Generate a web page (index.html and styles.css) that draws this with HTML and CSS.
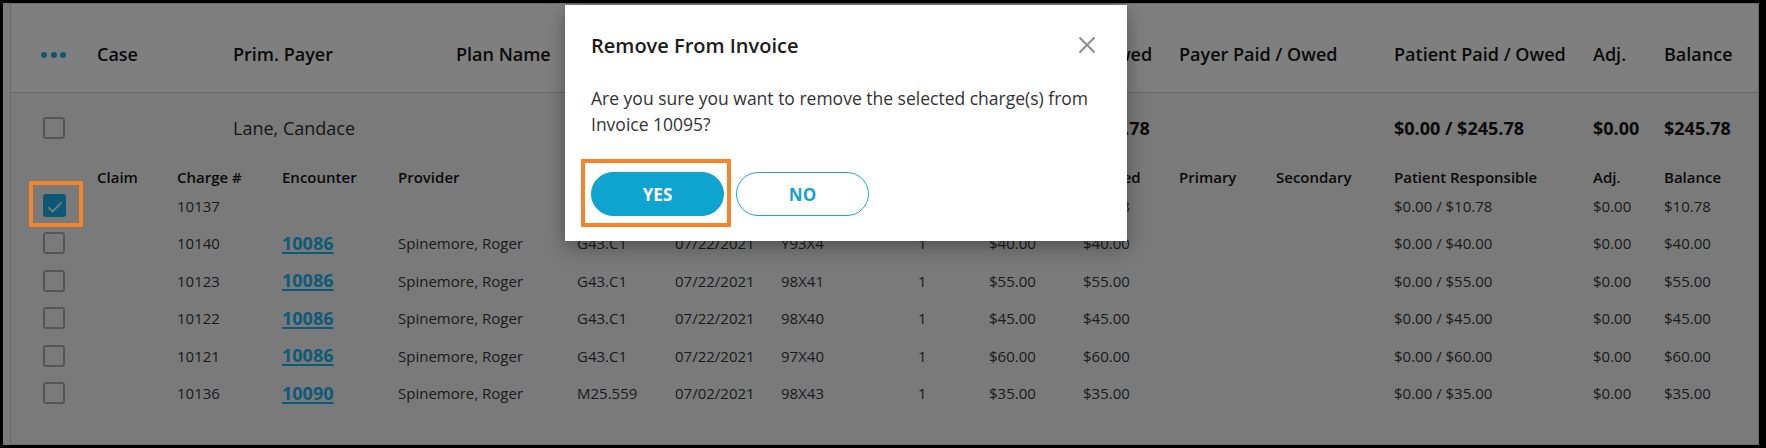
FILE: index.html
```html
<!DOCTYPE html>
<html lang="en">
<head>
<meta charset="utf-8">
<title>Remove From Invoice</title>
<link rel="stylesheet" href="styles.css">
</head>
<body>
<div class="frame">
  <div class="table">
    <div class="row head">
      <div class="dots"><span></span><span></span><span></span></div>
      <div>Case</div>
      <div>Prim. Payer</div>
      <div>Plan Name</div>
      <div></div>
      <div>Allowed</div>
      <div>Payer Paid / Owed</div>
      <div>Patient Paid / Owed</div>
      <div>Adj.</div>
      <div>Balance</div>
    </div>
    <div class="row summary">
      <div><span class="cb"></span></div>
      <div></div>
      <div>Lane, Candace</div>
      <div></div>
      <div></div>
      <div class="strong">$245.78</div>
      <div></div>
      <div class="strong">$0.00 / $245.78</div>
      <div class="strong">$0.00</div>
      <div class="strong">$245.78</div>
    </div>
    <div class="row detail subhead">
      <div></div>
      <div>Claim</div>
      <div>Charge #</div>
      <div>Encounter</div>
      <div>Provider</div>
      <div></div>
      <div></div>
      <div></div>
      <div></div>
      <div></div>
      <div>Allowed</div>
      <div>Primary</div>
      <div>Secondary</div>
      <div>Patient Responsible</div>
      <div>Adj.</div>
      <div>Balance</div>
    </div>
    <div class="row detail line">
      <div><span class="cb checked"><svg viewBox="0 0 23 23" width="23" height="23"><polyline points="5,13 9.5,17.5 18.5,8.5" fill="none" stroke="#fff" stroke-width="1.7"/></svg><span class="mark mark-cb"></span></span></div>
      <div></div>
      <div>10137</div>
      <div></div>
      <div></div>
      <div></div>
      <div></div>
      <div></div>
      <div></div>
      <div></div>
      <div>$10.78</div>
      <div></div>
      <div></div>
      <div>$0.00 / $10.78</div>
      <div>$0.00</div>
      <div>$10.78</div>
    </div>
    <div class="row detail line">
      <div><span class="cb"></span></div>
      <div></div>
      <div>10140</div>
      <div><a class="link" href="#">10086</a></div>
      <div>Spinemore, Roger</div>
      <div>G43.C1</div>
      <div>07/22/2021</div>
      <div>Y93X4</div>
      <div>1</div>
      <div>$40.00</div>
      <div>$40.00</div>
      <div></div>
      <div></div>
      <div>$0.00 / $40.00</div>
      <div>$0.00</div>
      <div>$40.00</div>
    </div>
    <div class="row detail line">
      <div><span class="cb"></span></div>
      <div></div>
      <div>10123</div>
      <div><a class="link" href="#">10086</a></div>
      <div>Spinemore, Roger</div>
      <div>G43.C1</div>
      <div>07/22/2021</div>
      <div>98X41</div>
      <div>1</div>
      <div>$55.00</div>
      <div>$55.00</div>
      <div></div>
      <div></div>
      <div>$0.00 / $55.00</div>
      <div>$0.00</div>
      <div>$55.00</div>
    </div>
    <div class="row detail line">
      <div><span class="cb"></span></div>
      <div></div>
      <div>10122</div>
      <div><a class="link" href="#">10086</a></div>
      <div>Spinemore, Roger</div>
      <div>G43.C1</div>
      <div>07/22/2021</div>
      <div>98X40</div>
      <div>1</div>
      <div>$45.00</div>
      <div>$45.00</div>
      <div></div>
      <div></div>
      <div>$0.00 / $45.00</div>
      <div>$0.00</div>
      <div>$45.00</div>
    </div>
    <div class="row detail line">
      <div><span class="cb"></span></div>
      <div></div>
      <div>10121</div>
      <div><a class="link" href="#">10086</a></div>
      <div>Spinemore, Roger</div>
      <div>G43.C1</div>
      <div>07/22/2021</div>
      <div>97X40</div>
      <div>1</div>
      <div>$60.00</div>
      <div>$60.00</div>
      <div></div>
      <div></div>
      <div>$0.00 / $60.00</div>
      <div>$0.00</div>
      <div>$60.00</div>
    </div>
    <div class="row detail line">
      <div><span class="cb"></span></div>
      <div></div>
      <div>10136</div>
      <div><a class="link" href="#">10090</a></div>
      <div>Spinemore, Roger</div>
      <div>M25.559</div>
      <div>07/02/2021</div>
      <div>98X43</div>
      <div>1</div>
      <div>$35.00</div>
      <div>$35.00</div>
      <div></div>
      <div></div>
      <div>$0.00 / $35.00</div>
      <div>$0.00</div>
      <div>$35.00</div>
    </div>
  </div>

  <div class="overlay">
    <div class="modal" role="dialog" aria-labelledby="modal-title">
      <div class="modal-head">
        <h2 id="modal-title" class="modal-title">Remove From Invoice</h2>
        <svg class="close" viewBox="0 0 18 18" width="18" height="18" aria-label="Close"><path d="M1.5 1.5 L16.5 16.5 M16.5 1.5 L1.5 16.5" stroke="#8d8d8d" stroke-width="2" fill="none"/></svg>
      </div>
      <p class="modal-text">Are you sure you want to remove the selected charge(s) from Invoice 10095?</p>
      <div class="modal-actions">
        <button class="btn btn-yes">YES</button>
        <button class="btn btn-no">NO</button>
      </div>
      <span class="mark mark-yes"></span>
    </div>
  </div>
</div>
</body>
</html>
```
FILE: styles.css
```css
* {
  box-sizing: border-box;
  margin: 0;
  padding: 0;
}

html,
body {
  background: #000;
}

body {
  width: 1766px;
  height: 448px;
  overflow: hidden;
  font-family: "Open Sans", "Liberation Sans", sans-serif;
  color: #3a3a3a;
}

.frame {
  position: relative;
  margin: 3px 7px 3px 3px;
  height: 442px;
  padding-left: 7px;
  background: #f4f5f7;
}

.table {
  height: 442px;
  background: #f4f5f7;
  border: 1px solid #d2d4d6;
}

.row {
  display: grid;
  align-items: center;
  padding-left: 30px;
  white-space: nowrap;
}

.head {
  grid-template-columns: 56px 136px 223px 533px 94px 96px 215px 199px 71px 1fr;
  height: 89px;
  padding-top: 12px;
  background: #fff;
  border-bottom: 1px solid #cfd1d3;
  font-size: 18px;
  font-weight: 600;
  color: #141414;
  line-height: 24px;
}

.dots {
  display: flex;
  gap: 3.5px;
  padding-top: 1px;
}

.dots span {
  width: 6px;
  height: 6px;
  border-radius: 50%;
  background: #1aaee4;
}

.summary {
  grid-template-columns: 56px 136px 223px 533px 94px 96px 215px 199px 71px 1fr;
  height: 70px;
  font-size: 18px;
  line-height: 24px;
  color: #2e2e2e;
}

.strong {
  font-weight: 700;
  color: #141414;
}

.detail {
  grid-template-columns: 56px 80px 105px 116px 179px 98px 106px 137px 71px 94px 96px 97px 118px 199px 71px 1fr;
}

.subhead {
  height: 24px;
  padding-top: 4px;
  align-items: start;
  font-size: 15px;
  font-weight: 600;
  line-height: 20px;
  color: #141414;
}

.line {
  height: 37.5px;
  font-size: 15px;
  line-height: 20px;
  color: #383838;
}

.cb {
  position: relative;
  display: block;
  width: 22px;
  height: 22px;
  margin-left: 2px;
  border: 2px solid #acacac;
  border-radius: 3px;
}

.cb.checked {
  width: 23px;
  height: 23px;
  border: 0;
  background: #17b2ee;
  margin-top: -1px;
}

.cb.checked svg {
  display: block;
}

.link {
  font-size: 18px;
  font-weight: 700;
  color: #1cb6f2;
  text-decoration: underline;
  text-decoration-thickness: 2px;
  text-underline-offset: 2px;
}

.overlay {
  position: absolute;
  inset: 0;
  background: rgba(0, 0, 0, 0.5);
  z-index: 10;
}

.mark {
  position: absolute;
  border: 4px solid #f5842b;
  z-index: 20;
}

.mark-cb {
  left: -14px;
  top: -13px;
  width: 54px;
  height: 46px;
}

.modal {
  position: absolute;
  left: 562px;
  top: 2px;
  width: 562px;
  height: 236px;
  padding: 27px 18px 0 26px;
  background: #fff;
  box-shadow: 0 6px 18px rgba(0, 0, 0, 0.35);
}

.modal-head {
  display: flex;
  justify-content: space-between;
  align-items: center;
  margin-right: 13px;
}

.modal-title {
  font-size: 20px;
  font-weight: 600;
  line-height: 28px;
  color: #1c1c1c;
}

.close {
  display: block;
  margin-top: -3px;
}

.modal-text {
  margin-top: 25px;
  font-size: 17.5px;
  line-height: 26px;
  color: #333;
}

.modal-actions {
  display: flex;
  gap: 12px;
  margin-top: 35px;
}

.btn {
  width: 133px;
  height: 44px;
  border-radius: 22px;
  font-family: "Open Sans", "Liberation Sans", sans-serif;
  font-size: 17px;
  font-weight: 700;
  cursor: pointer;
}

.btn-yes {
  background: #0fa4d0;
  border: 1px solid #0fa4d0;
  color: #fff;
}

.btn-no {
  background: #fff;
  border: 1px solid #1ea5d3;
  color: #14a3d1;
}

.mark-yes {
  left: 16px;
  top: 154px;
  width: 150px;
  height: 68px;
}
```
